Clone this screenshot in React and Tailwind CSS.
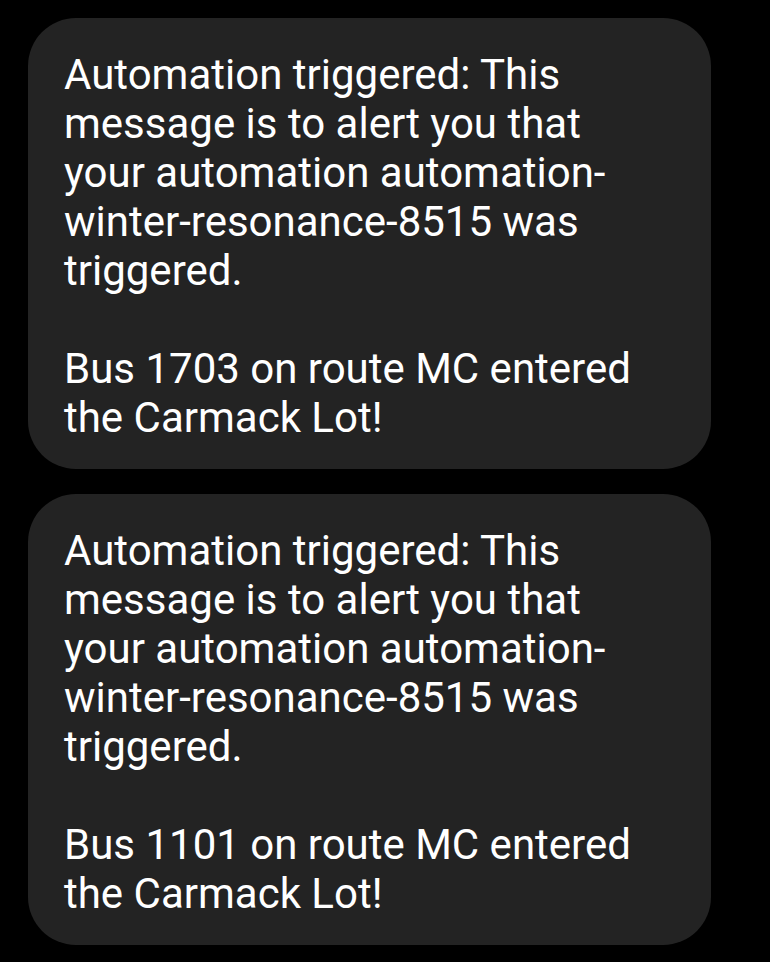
import React from 'react'

const messages = [
  { id: 1, bus: '1703' },
  { id: 2, bus: '1101' },
]

function Bubble({ bus }) {
  return (
    <div className="w-[683px] rounded-[48px] bg-[#232323] pl-[36px] pr-[62px] pt-[32px] pb-[27px] text-[42px] leading-[49px] text-white font-['Roboto',sans-serif]">
      <p>
        Automation triggered: This message is to alert you that your automation automation-winter-resonance-8515 was
        triggered.
      </p>
      <p className="mt-[49px]">Bus {bus} on route MC entered the Carmack Lot!</p>
    </div>
  )
}

export default function App() {
  return (
    <div className="min-h-[962px] w-[770px] bg-black pl-[28px] pt-[18px] flex flex-col gap-[25px]">
      {messages.map((m) => (
        <Bubble key={m.id} bus={m.bus} />
      ))}
    </div>
  )
}
